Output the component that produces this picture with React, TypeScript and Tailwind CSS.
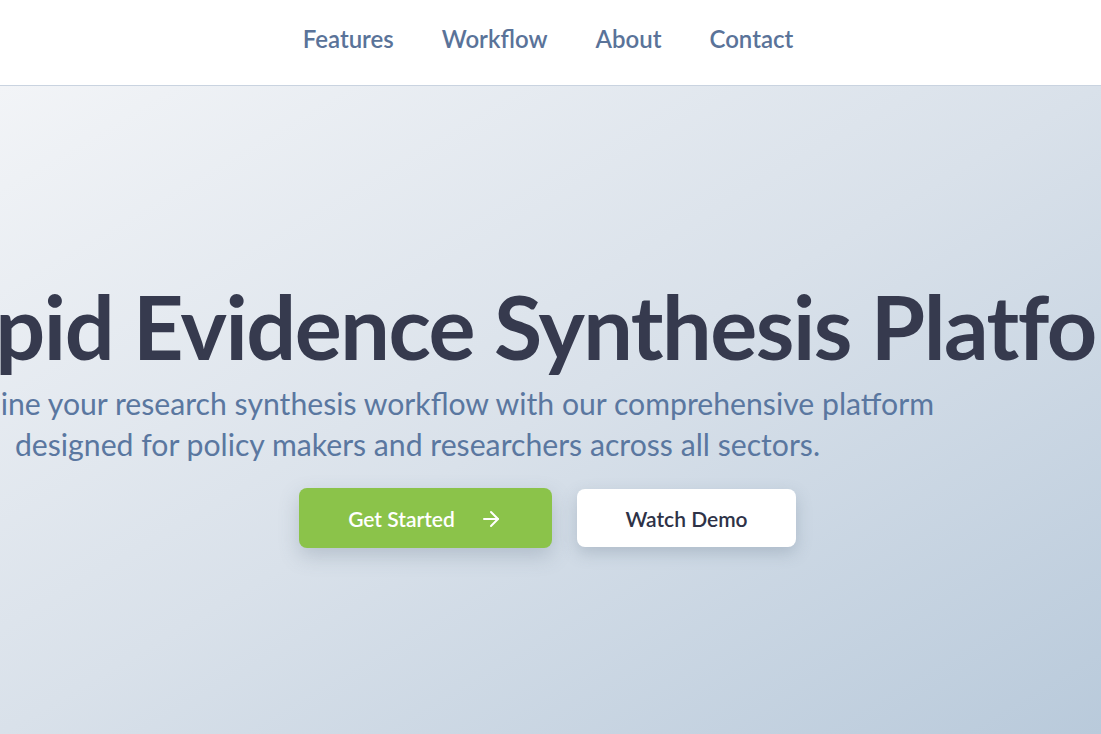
import React from "react";
import { ArrowRight } from "lucide-react";

export default function App() {
  const font = { fontFamily: 'Lato, "Open Sans", sans-serif' };
  return (
    <div className="w-full h-[734px] overflow-hidden" style={font}>
      <header className="h-[86px] pb-2 pr-[5px] bg-white border-b border-[#c9d3e0] flex items-center justify-center gap-12">
        <a className="text-[24px] font-semibold text-[#5a7399]">Features</a>
        <a className="text-[24px] font-semibold text-[#5a7399]">Workflow</a>
        <a className="text-[24px] font-semibold text-[#5a7399]">About</a>
        <a className="text-[24px] font-semibold text-[#5a7399]">Contact</a>
      </header>
      <section className="h-[648px] overflow-hidden bg-gradient-to-br from-[#f2f4f7] via-[#d9e1ea] to-[#b9cadb] flex flex-col items-center pt-[185px]">
        <h1 className="whitespace-nowrap text-[88px] leading-[110px] font-bold tracking-[-1.5px] text-[#363a4e] mr-[4px]">
          Rapid Evidence Synthesis Platform
        </h1>
        <p className="whitespace-nowrap text-center text-[30.2px] leading-[41px] text-[#5a77a0] mr-[266px] mt-[2px]">
          Streamline your research synthesis workflow with our comprehensive platform
          <br />
          designed for policy makers and researchers across all sectors.
        </p>
        <div className="flex items-center gap-[25px] mt-[23px] mr-[6px]">
          <button className="w-[253px] h-[60px] pt-[2px] rounded-lg bg-[#8bc34a] text-white text-[21px] font-semibold flex items-center justify-center gap-6 shadow-[0_8px_20px_rgba(80,100,120,0.25)]">
            Get Started
            <ArrowRight size={24} strokeWidth={2} />
          </button>
          <button className="w-[219px] h-[58px] pt-[2px] rounded-lg bg-white text-[#2e3247] text-[21px] font-semibold flex items-center justify-center shadow-[0_6px_16px_rgba(80,100,120,0.25)]">
            Watch Demo
          </button>
        </div>
      </section>
    </div>
  );
}
